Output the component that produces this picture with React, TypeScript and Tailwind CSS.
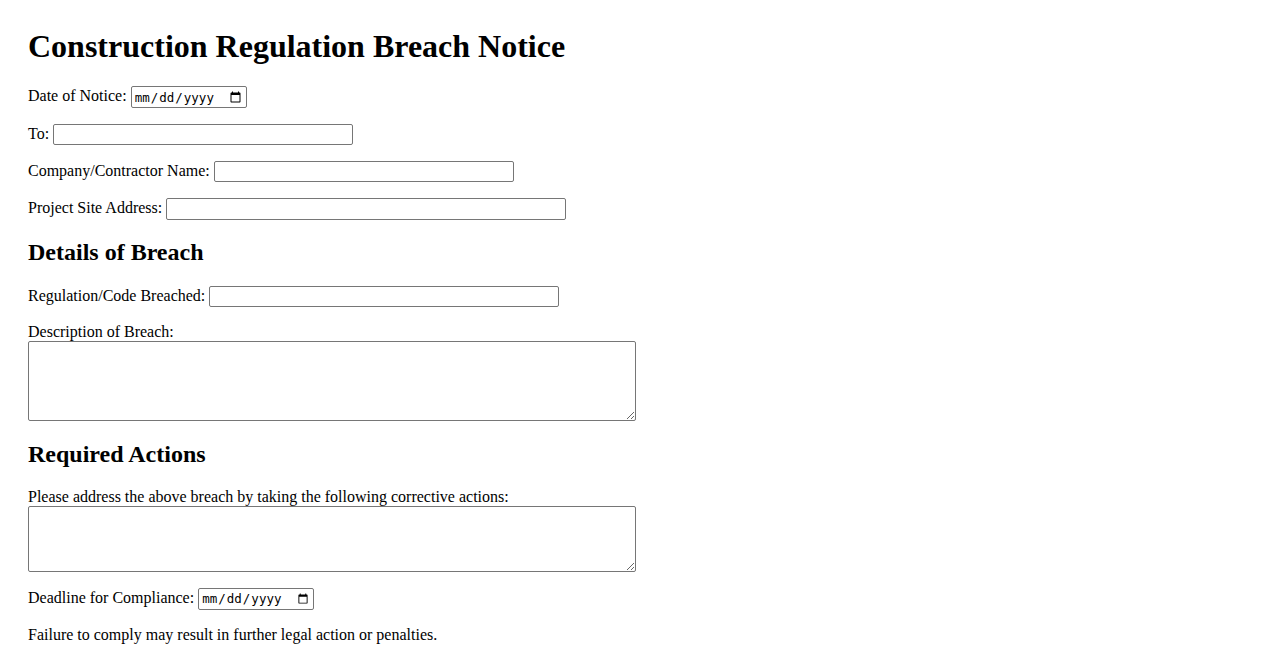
const serif = "font-['Liberation_Serif','Times_New_Roman',serif]";

const textInput =
  "box-border h-[21.33px] rounded-[2px] border border-[#767676] bg-white px-[3px] py-[2px] align-baseline font-['Liberation_Sans',Arial,sans-serif] text-[13.33px] leading-[normal] text-black outline-none";

const dateInput =
  "box-border h-[21.33px] w-[116px] rounded-[2px] border border-[#767676] bg-white px-[2px] py-[1px] align-baseline font-['DejaVu_Sans_Mono',monospace] text-[12.5px] leading-[normal] text-black outline-none";

const area =
  "box-border block w-[608px] resize-y rounded-[2px] border border-[#767676] bg-white p-[2px] font-['DejaVu_Sans_Mono',monospace] text-[13.33px] text-black outline-none";

function Row({ label, children }: { label: string; children: React.ReactNode }) {
  return (
    <p className="mb-4 leading-[normal]">
      <label>{label} </label>
      {children}
    </p>
  );
}

export default function App() {
  return (
    <div className={`min-h-screen bg-white px-[28px] pt-[28px] text-[16px] text-black ${serif}`}>
      <h1 className="mb-[21.44px] text-[32px] font-bold leading-[normal]">Construction Regulation Breach Notice</h1>

      <Row label="Date of Notice:">
        <input type="date" className={dateInput} />
      </Row>
      <Row label="To:">
        <input type="text" className={`${textInput} w-[300px]`} />
      </Row>
      <Row label="Company/Contractor Name:">
        <input type="text" className={`${textInput} w-[300px]`} />
      </Row>
      <Row label="Project Site Address:">
        <input type="text" className={`${textInput} w-[400px]`} />
      </Row>

      <h2 className="mt-[18.92px] mb-[19.92px] text-[24px] font-bold leading-[normal]">Details of Breach</h2>

      <Row label="Regulation/Code Breached:">
        <input type="text" className={`${textInput} w-[350px]`} />
      </Row>
      <div className="mb-4 leading-[normal]">
        <label className="block">Description of Breach:</label>
        <textarea className={`${area} h-[80.5px]`} />
      </div>

      <h2 className="mt-[19.92px] mb-[19.92px] text-[24px] font-bold leading-[normal]">Required Actions</h2>

      <div className="mb-4 leading-[normal]">
        <label className="block">Please address the above breach by taking the following corrective actions:</label>
        <textarea className={`${area} h-[66px]`} />
      </div>

      <Row label="Deadline for Compliance:">
        <input type="date" className={dateInput} />
      </Row>

      <p className="mb-4 leading-[normal]">Failure to comply may result in further legal action or penalties.</p>
    </div>
  );
}
